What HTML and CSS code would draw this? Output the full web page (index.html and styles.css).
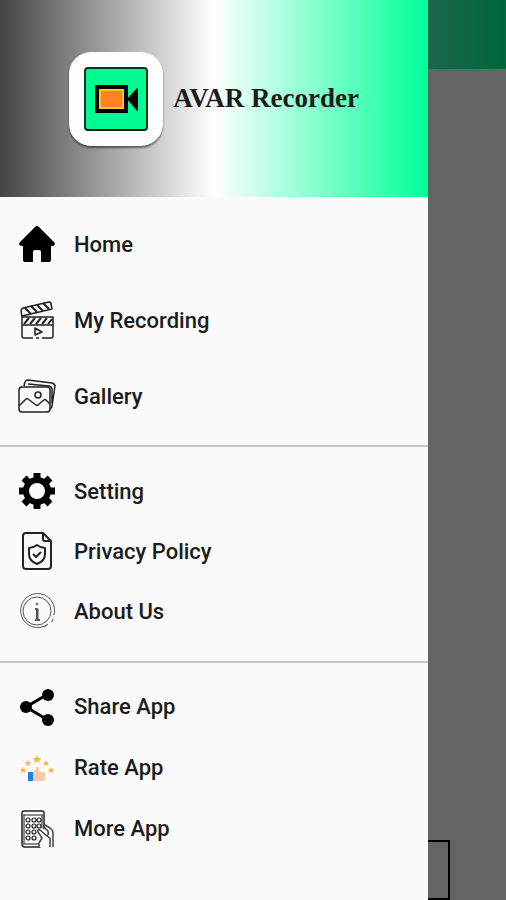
FILE: index.html
```html
<!DOCTYPE html>
<html lang="en">
<head>
    <meta charset="UTF-8">
    <meta name="viewport" content="width=device-width, initial-scale=1.0">
    <title>AVAR Recorder</title>
    <link rel="stylesheet" href="styles.css">
</head>
<body>
    <div class="page">
        <header class="toolbar"></header>
        <main class="content">
            <div class="preview"></div>
        </main>
    </div>

    <div class="scrim"></div>

    <aside class="drawer">
        <div class="drawer-header">
            <div class="logo">
                <svg viewBox="0 0 64 64" width="64" height="64">
                    <rect x="1" y="1" width="62" height="62" rx="3" fill="#00fb93" stroke="#08351f" stroke-width="2"/>
                    <path d="M3 63H61" stroke="#031d10" stroke-width="2"/>
                    <rect x="11" y="18" width="33" height="28" fill="#000"/>
                    <path d="M43 32L54 20V45Z" fill="#000"/>
                    <rect x="15" y="22" width="25" height="20" fill="#ffc90e"/>
                    <rect x="17" y="24" width="21" height="16" fill="#ff7f27"/>
                </svg>
            </div>
            <h1 class="app-name">AVAR Recorder</h1>
        </div>

        <nav>
            <ul class="menu menu-main">
                <li>
                    <a href="#">
                        <svg viewBox="0 0 38 38" class="icon">
                            <path d="M17 2Q19 0 21 2L36 17Q38 20 35 21H33V35Q33 37 31 37H23V27Q23 25 21 25H17Q15 25 15 27V37H7Q5 37 5 35V21H3Q0 20 2 17Z" fill="#000"/>
                        </svg>
                        Home
                    </a>
                </li>
                <li>
                    <a href="#">
                        <svg viewBox="0 0 38 38" class="icon line">
                            <path d="M4 16L3 10Q3 8 5 7L31 1Q33 1 33 3L34 8L4 15"/>
                            <path d="M7 7L13 13M13 5L19 11M19 4L25 10M25 2L31 8" stroke-width="2"/>
                            <path d="M4 16H35V35Q35 37 33 37H24M21 37H18M15 37H6Q4 37 4 35V16M4 24H35"/>
                            <path d="M6 23L11 17M12 23L17 17M18 23L23 17M24 23L29 17M30 23L34 18" stroke-width="2"/>
                            <path d="M17 27L24 31L17 34Z"/>
                        </svg>
                        My Recording
                    </a>
                </li>
                <li>
                    <a href="#">
                        <svg viewBox="0 0 38 38" class="icon line">
                            <rect x="1" y="10" width="31" height="25" rx="3"/>
                            <path d="M6 9L7 5Q8 3 10 3L34 6Q37 7 37 9L34 29Q34 31 32 32M10 7L31 9Q34 10 34 12V26"/>
                            <circle cx="20" cy="18" r="3"/>
                            <path d="M1 29L8 22Q9 21 10 22L18 28Q20 29 21 27L26 23Q27 22 28 23L32 27"/>
                        </svg>
                        Gallery
                    </a>
                </li>
            </ul>

            <ul class="menu menu-info">
                <li>
                    <a href="#">
                        <svg viewBox="0 0 38 38" class="icon">
                            <circle cx="19" cy="19" r="11" fill="none" stroke="#000" stroke-width="6"/>
                            <g stroke="#000" stroke-width="6" stroke-linejoin="round">
                                <path d="M19 1V9M19 29V37M1 19H9M29 19H37" stroke-width="7"/>
                                <path d="M6 6L12 12M26 26L32 32M32 6L26 12M12 26L6 32" stroke-width="7"/>
                            </g>
                        </svg>
                        Setting
                    </a>
                </li>
                <li>
                    <a href="#">
                        <svg viewBox="0 0 38 38" class="icon line bold">
                            <path d="M25 1H8Q5 1 5 4V34Q5 37 8 37H30Q33 37 33 34V9Z"/>
                            <path d="M25 1V7Q25 9 27 9H33"/>
                            <path d="M19 13Q23 16 27 16V22Q27 29 19 32Q11 29 11 22V16Q15 16 19 13Z"/>
                            <path d="M15 22L18 25L23 20"/>
                        </svg>
                        Privacy Policy
                    </a>
                </li>
                <li>
                    <a href="#">
                        <svg viewBox="0 0 38 38" class="icon line thin">
                            <path d="M30 32A17 17 0 1 1 36 23M35 27L34 30M26 35L29 33"/>
                            <circle cx="19" cy="19" r="14"/>
                            <circle cx="19" cy="12" r="1"/>
                            <path d="M17 17H19V27M17 28H22" stroke-width="2"/>
                            <path d="M20 17V27"/>
                        </svg>
                        About Us
                    </a>
                </li>
            </ul>

            <ul class="menu menu-apps">
                <li>
                    <a href="#">
                        <svg viewBox="0 0 38 38" class="icon">
                            <path d="M30 6L8 19L30 32" fill="none" stroke="#000" stroke-width="3"/>
                            <circle cx="30" cy="7" r="6"/>
                            <circle cx="8" cy="19" r="6"/>
                            <circle cx="30" cy="32" r="6"/>
                        </svg>
                        Share App
                    </a>
                </li>
                <li>
                    <a href="#">
                        <svg viewBox="0 0 38 38" class="icon">
                            <defs>
                                <path id="star" d="M0 -4L1 -1L4 -1L2 1L3 4L0 2L-3 4L-2 1L-4 -1L-1 -1Z"/>
                            </defs>
                            <g fill="#fbb03b">
                                <use href="#star" x="19" y="10"/>
                                <use href="#star" transform="translate(10 14) scale(.75)"/>
                                <use href="#star" transform="translate(28 14) scale(.75)"/>
                                <use href="#star" transform="translate(5 21) scale(.8)"/>
                                <use href="#star" transform="translate(33 21) scale(.8)"/>
                            </g>
                            <path d="M15 23Q18 22 18 18Q21 17 21 20V23H26Q27 23 27 25V30Q27 32 25 32H15Z" fill="#ffc7ab"/>
                            <rect x="10" y="23" width="5" height="9" fill="#1685d8"/>
                            <rect x="15" y="23" width="1" height="8" fill="#a9dcf5"/>
                        </svg>
                        Rate App
                    </a>
                </li>
                <li>
                    <a href="#">
                        <svg viewBox="0 0 38 38" class="icon line">
                            <path d="M26 19V3Q26 1 24 1H6Q4 1 4 3V34Q4 37 7 37H22V32"/>
                            <path d="M4 5H26M6 5V34M24 5V18M4 34H20" stroke="#666"/>
                            <g stroke-width="1.2">
                                <circle cx="10" cy="10" r="2"/><circle cx="16" cy="10" r="2"/><circle cx="21" cy="10" r="2"/>
                                <circle cx="10" cy="16" r="2"/><circle cx="16" cy="16" r="2"/><circle cx="21" cy="16" r="2"/>
                                <circle cx="10" cy="22" r="2"/><circle cx="16" cy="22" r="2"/>
                                <circle cx="10" cy="28" r="2"/><circle cx="16" cy="28" r="2"/>
                            </g>
                            <path d="M35 37V23Q35 20 32 18L27 15Q25 16 27 18L30 21Q31 24 29 26L22 20Q19 19 20 22L24 28L21 33V37M32 37V28L29 26" fill="#fafafa" stroke="#444"/>
                        </svg>
                        More App
                    </a>
                </li>
            </ul>
        </nav>
    </aside>
</body>
</html>
```
FILE: styles.css
```css
:root {
    --surface: #fafafa;
    --text-color: #1c1c1c;
    --divider: #c8c8c8;
    --brand-gradient: linear-gradient(to right, #444444, #ffffff 50%, #00ff99);
}

* {
    box-sizing: border-box;
}

body {
    margin: 0;
    font-family: Roboto, sans-serif;
    color: var(--text-color);
    background: var(--surface);
}

.page {
    display: flex;
    flex-direction: column;
    min-height: 100vh;
}

.toolbar {
    height: 69px;
    background: var(--brand-gradient);
}

.content {
    flex: 1;
    display: flex;
    flex-direction: column;
    justify-content: flex-end;
    padding: 0 56px;
}

.preview {
    height: 60px;
    border: 2px solid #000;
}

.scrim {
    position: fixed;
    inset: 0;
    background: rgba(0, 0, 0, 0.6);
}

.drawer {
    position: fixed;
    top: 0;
    bottom: 0;
    left: 0;
    width: 84.6%;
    overflow: hidden;
    background: var(--surface);
}

.drawer-header {
    display: flex;
    align-items: center;
    justify-content: center;
    gap: 10px;
    height: 197px;
    background: var(--brand-gradient);
}

.logo {
    display: flex;
    align-items: center;
    justify-content: center;
    width: 94px;
    height: 94px;
    border-radius: 22px;
    background: #fdfdfd;
    box-shadow: 0 2px 2px rgba(0, 0, 0, 0.5);
}

.app-name {
    margin: 0;
    font-family: "Liberation Serif", serif;
    font-size: 27px;
    font-weight: bold;
    white-space: nowrap;
}

.menu {
    margin: 0;
    padding: 14px 0;
    list-style: none;
}

.menu + .menu {
    border-top: 2px solid var(--divider);
}

.menu a {
    display: flex;
    align-items: center;
    gap: 18px;
    height: 60px;
    padding: 0 18px;
    color: inherit;
    font-size: 22px;
    font-weight: 500;
    text-decoration: none;
}

.menu-main {
    padding: 9px 0 11px;
}

.menu-main a {
    height: 76px;
}

.menu-info {
    padding-bottom: 20px;
}

.menu-apps {
    padding-top: 13px;
}

.menu-apps a {
    height: 61px;
}

.icon {
    flex: none;
    width: 38px;
    height: 38px;
}

.line {
    fill: none;
    stroke: #222;
    stroke-width: 1.5;
    stroke-linejoin: round;
}

.bold {
    stroke-width: 2;
}

.thin {
    stroke: #555;
    stroke-width: 1;
}
```
